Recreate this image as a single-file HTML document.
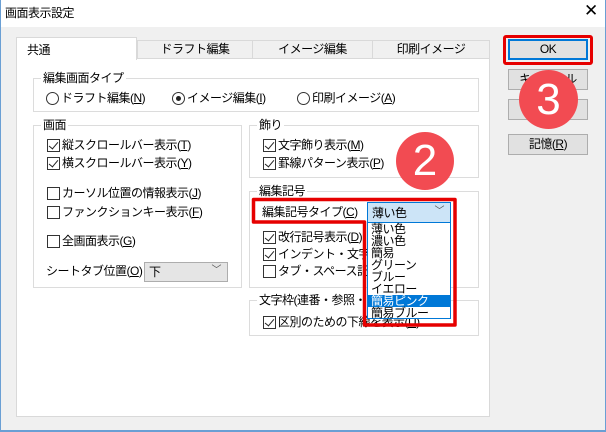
<!DOCTYPE html>
<html><head><meta charset="utf-8"><style>
*{box-sizing:border-box;margin:0;padding:0}
body{width:606px;height:432px;position:relative;overflow:hidden;background:#f0f0f0;font-family:"Liberation Sans","Noto Sans CJK JP",sans-serif;font-size:12px;color:#000;letter-spacing:-0.5px}
.a{position:absolute;white-space:nowrap;line-height:14px}
.grp{position:absolute;border:1px solid #dcdcdc}
.gl{position:absolute;background:#fff;padding:0 2px;line-height:14px;top:-8px;left:7px;white-space:nowrap}
.cb{position:absolute;width:13px;height:13px;border:1px solid #333;background:#fff}
.cb.c::after{content:"";position:absolute;left:3px;top:0px;width:4px;height:8px;border:solid #222;border-width:0 1.5px 1.5px 0;transform:rotate(40deg)}
.rd{position:absolute;width:13px;height:13px;border:1px solid #333;border-radius:50%;background:#fff}
.rd.c::after{content:"";position:absolute;left:3px;top:3px;width:5px;height:5px;border-radius:50%;background:#222}
.tab{position:absolute;top:40px;height:19px;border:1px solid #d9d9d9;background:#f0f0f0;text-align:center;line-height:16px}
.btn{position:absolute;left:508px;width:80px;height:21px;background:#e1e1e1;border:1px solid #adadad;text-align:center;line-height:19px}
.circ{position:absolute;border-radius:50%;background:#f24b52;color:#fff;text-align:center;font-size:44px;font-family:"Liberation Sans",sans-serif;letter-spacing:0}
u{text-decoration:underline}
</style></head><body>
<div style="position:absolute;left:0;top:0;width:606px;height:27px;background:#fff"></div>
<div class="a" style="left:5px;top:6px">画面表示設定</div>
<div class="a" style="left:584px;top:4px;font-size:17px;font-weight:300">✕</div>
<div style="position:absolute;left:0;top:0;width:1px;height:432px;background:#6a9fd4"></div>
<div style="position:absolute;left:0;top:430px;width:606px;height:2px;background:#6a9fd4"></div>
<div style="position:absolute;left:605px;top:0;width:1px;height:432px;background:#6a9fd4"></div>

<div style="position:absolute;left:16px;top:58px;width:474px;height:359px;background:#fff;border:1px solid #d9d9d9"></div>
<div class="tab" style="left:137px;width:116px">ドラフト編集</div>
<div class="tab" style="left:252px;width:121px">イメージ編集</div>
<div class="tab" style="left:372px;width:118px">印刷イメージ</div>
<div style="position:absolute;left:16px;top:37px;width:121px;height:23px;background:#fff;border:1px solid #d9d9d9;border-bottom:none;padding:3px 0 0 10px">共通</div>

<div class="grp" style="left:33px;top:78px;width:446px;height:34px"><div class="gl">編集画面タイプ</div></div>
<div class="rd" style="left:46px;top:92px"></div><div class="a" style="left:61px;top:91px">ドラフト編集(<u>N</u>)</div>
<div class="rd c" style="left:172px;top:92px"></div><div class="a" style="left:187px;top:91px">イメージ編集(<u>I</u>)</div>
<div class="rd" style="left:297px;top:92px"></div><div class="a" style="left:312px;top:91px">印刷イメージ(<u>A</u>)</div>

<div class="grp" style="left:33px;top:125px;width:209px;height:163px"><div class="gl">画面</div></div>
<div class="cb c" style="left:47px;top:139px"></div><div class="a" style="left:62px;top:138px">縦スクロールバー表示(<u>T</u>)</div>
<div class="cb c" style="left:47px;top:157px"></div><div class="a" style="left:62px;top:156px">横スクロールバー表示(<u>Y</u>)</div>
<div class="cb" style="left:47px;top:187px"></div><div class="a" style="left:62px;top:186px">カーソル位置の情報表示(<u>J</u>)</div>
<div class="cb" style="left:47px;top:206px"></div><div class="a" style="left:62px;top:205px">ファンクションキー表示(<u>F</u>)</div>
<div class="cb" style="left:47px;top:235px"></div><div class="a" style="left:62px;top:234px">全画面表示(<u>G</u>)</div>
<div class="a" style="left:46px;top:264px">シートタブ位置(<u>O</u>)</div>
<div style="position:absolute;left:144px;top:262px;width:84px;height:20px;background:#e5e5e5;border:1px solid #adadad;padding:2px 0 0 4px;line-height:14px">下<span style="position:absolute;right:6px;top:1px;color:#555;font-size:10px">﹀</span></div>

<div class="grp" style="left:249px;top:125px;width:230px;height:53px"><div class="gl">飾り</div></div>
<div class="cb c" style="left:263px;top:139px"></div><div class="a" style="left:278px;top:138px">文字飾り表示(<u>M</u>)</div>
<div class="cb c" style="left:263px;top:157px"></div><div class="a" style="left:278px;top:156px">罫線パターン表示(<u>P</u>)</div>

<div class="grp" style="left:249px;top:191px;width:230px;height:97px"><div class="gl">編集記号</div></div>
<div class="a" style="left:262px;top:205px">編集記号タイプ(<u>C</u>)</div>
<div class="cb c" style="left:263px;top:231px"></div><div class="a" style="left:278px;top:230px">改行記号表示(<u>D</u>)</div>
<div class="cb c" style="left:263px;top:248px"></div><div class="a" style="left:278px;top:247px">インデント・文字揃え</div>
<div class="cb" style="left:263px;top:265px"></div><div class="a" style="left:278px;top:264px">タブ・スペース記号表示</div>

<div class="grp" style="left:249px;top:300px;width:230px;height:36px"><div class="gl">文字枠(連番・参照・フィールド)</div></div>
<div class="cb c" style="left:263px;top:316px"></div><div class="a" style="left:278px;top:315px">区別のための下線を表示(<u>U</u>)</div>

<div style="position:absolute;left:367px;top:202px;width:84px;height:21px;background:#cce4f7;border:1px solid #0078d7;padding:3px 0 0 4px;line-height:14px">薄い色<span style="position:absolute;right:6px;top:2px;color:#555;font-size:10px">﹀</span></div>
<div style="position:absolute;left:367px;top:222px;width:84px;height:97px;background:#fff;border:1px solid #0078d7;line-height:12px;font-size:12px">
<div style="padding-left:3px">薄い色</div><div style="padding-left:3px">濃い色</div><div style="padding-left:3px">簡易</div><div style="padding-left:3px">グリーン</div><div style="padding-left:3px">ブルー</div><div style="padding-left:3px">イエロー</div><div style="padding-left:3px;background:#0078d7;color:#fff">簡易ピンク</div><div style="padding-left:3px">簡易ブルー</div></div>

<svg style="position:absolute;left:0;top:0" width="606" height="432"><path d="M253.5 199.5H455V325H364.5V222H253.5Z" fill="none" stroke="#e60000" stroke-width="3.5" stroke-linejoin="round"/></svg>

<div class="btn" style="top:39px;border:2px solid #0078d7;line-height:17px">OK</div>
<div style="position:absolute;left:503px;top:35px;width:90px;height:30px;border:3px solid #e60000;border-radius:3px"></div>
<div class="btn" style="top:69px">キャンセル</div>
<div class="btn" style="top:99px">適用</div>
<div class="btn" style="top:134px">記憶(<u>R</u>)</div>

<div class="circ" style="left:396px;top:132px;width:58px;height:58px;line-height:58px">2</div>
<div class="circ" style="left:519px;top:70px;width:59px;height:59px;line-height:59px">3</div>
</body></html>
